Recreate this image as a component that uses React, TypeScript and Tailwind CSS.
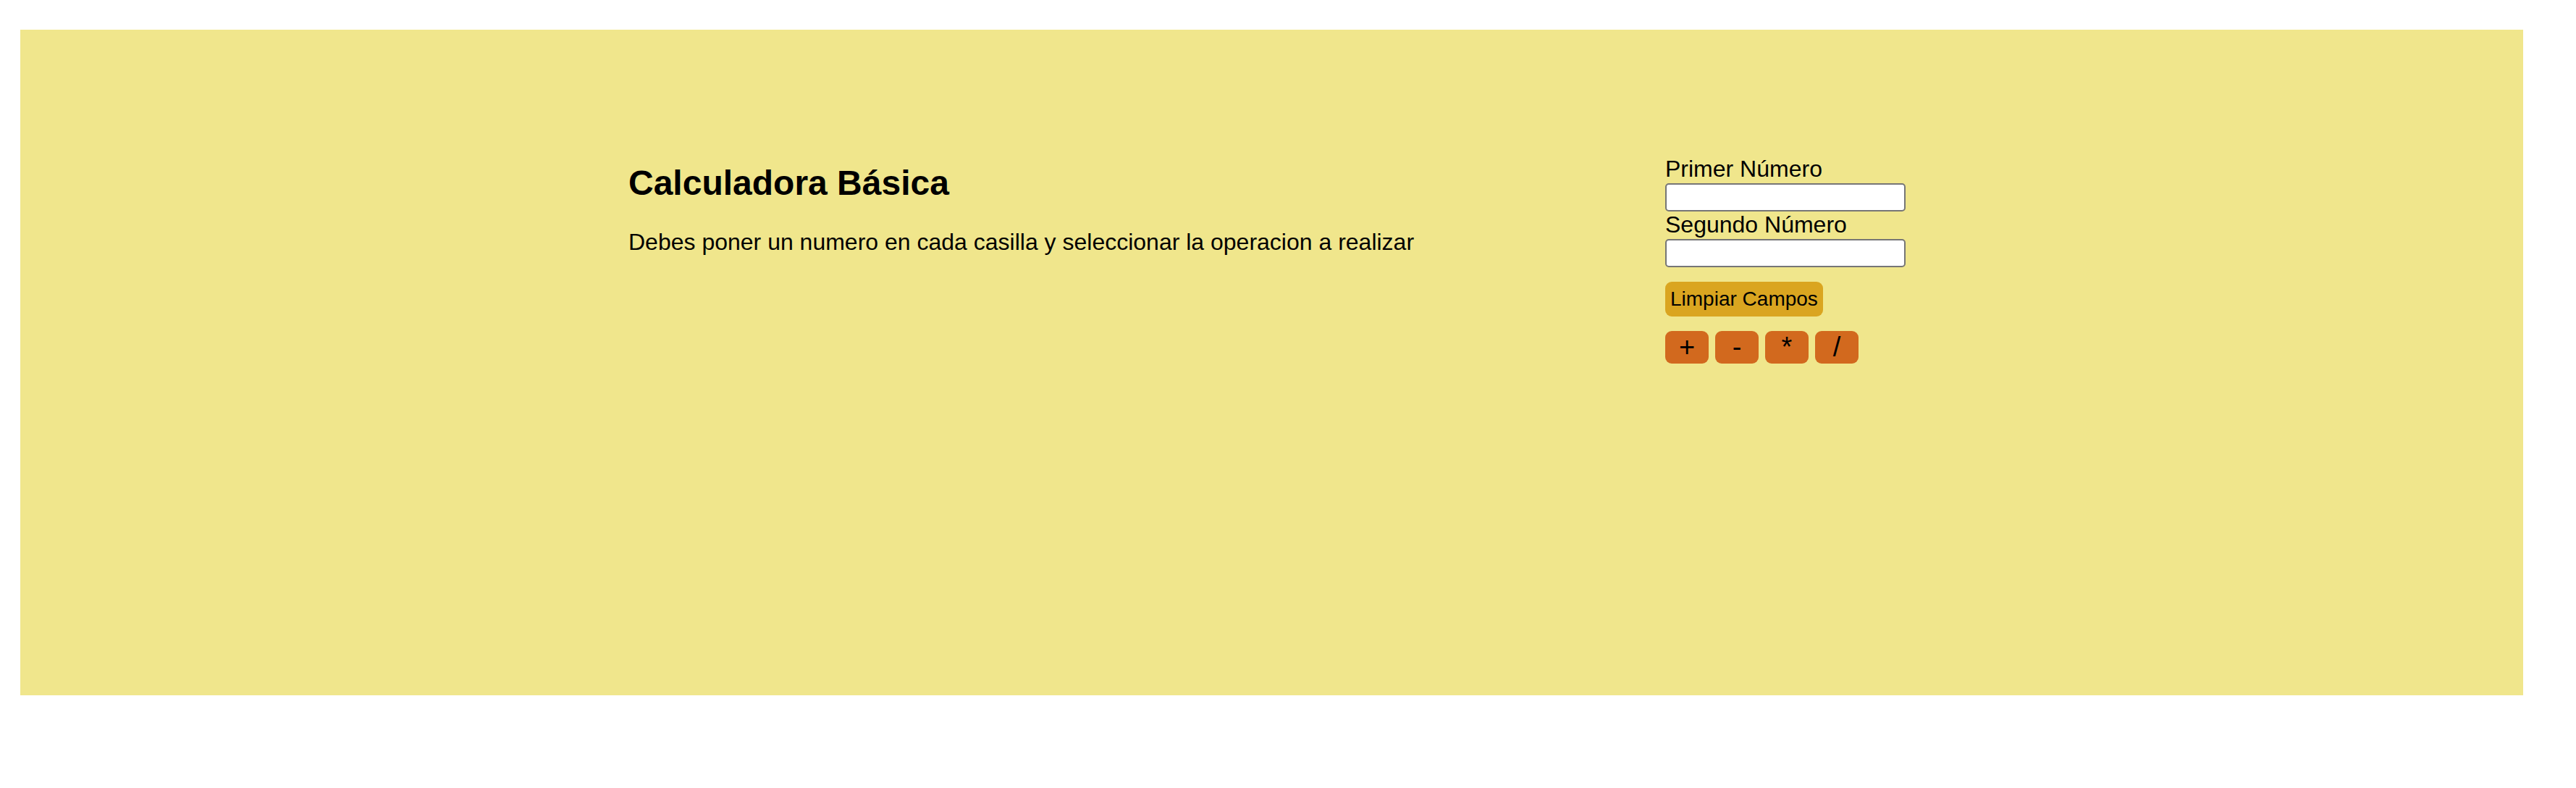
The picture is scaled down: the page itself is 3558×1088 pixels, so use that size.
import React from "react";

export default function App() {
  const ops = ["+", "-", "*", "/"];
  return (
    <div
      className="min-h-[1088px] w-[3558px] bg-white pt-[41px] pl-[28px] text-black"
      style={{ fontFamily: '"Liberation Sans", Arial, sans-serif' }}
    >
      <div className="flex h-[919px] w-[3457px] bg-[#F0E68C] pl-[840px]">
        <div className="w-[1432px] pt-[184px]">
          <h1 className="text-[48px] font-bold leading-[55px]">Calculadora Básica</h1>
          <p className="mt-[36px] text-[32px] leading-[37px]">
            Debes poner un numero en cada casilla y seleccionar la operacion a realizar
          </p>
        </div>
        <div className="flex flex-col items-start pt-[174px]">
          <label className="text-[32px] leading-[37px]">Primer Número</label>
          <input
            type="text"
            className="mt-[1px] h-[39px] w-[332px] rounded-[5px] border-2 border-[#767676] bg-white outline-none"
          />
          <label className="text-[32px] leading-[37px]">Segundo Número</label>
          <input
            type="text"
            className="mt-[1px] h-[39px] w-[332px] rounded-[5px] border-2 border-[#767676] bg-white outline-none"
          />
          <button className="mt-[20px] rounded-[9px] bg-[#DAA520] px-[7px] py-[8px] text-[28px] leading-[32px]">
            Limpiar Campos
          </button>
          <div className="mt-[20px] flex gap-[9px]">
            {ops.map((o) => (
              <button
                key={o}
                className="flex h-[45px] w-[60px] items-center justify-center rounded-[9px] bg-[#D2691E] text-[38px] leading-[45px]"
              >
                {o}
              </button>
            ))}
          </div>
        </div>
      </div>
    </div>
  );
}
